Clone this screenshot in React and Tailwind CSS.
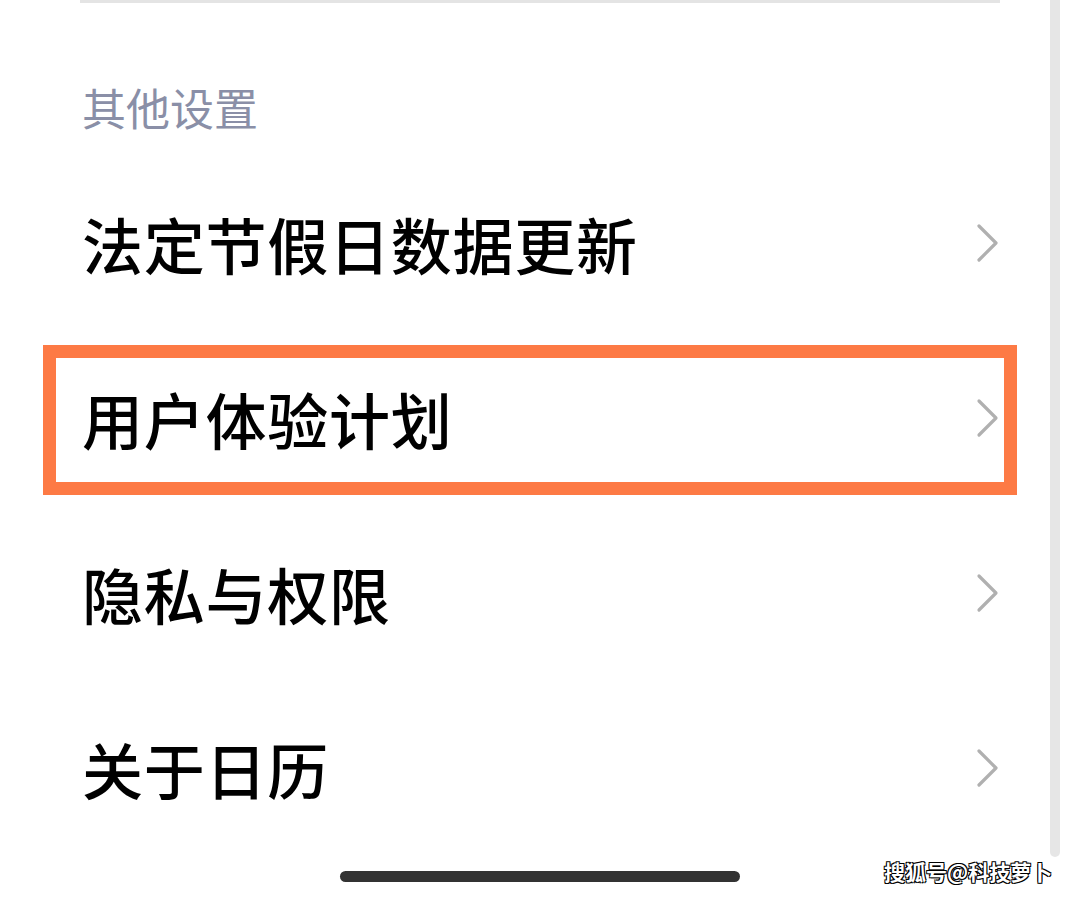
/**
 * 日历设置 — 其他设置列表
 */

const ITEMS = [
  { id: 'holiday', label: '法定节假日数据更新' },
  { id: 'ux', label: '用户体验计划', marked: true },
  { id: 'privacy', label: '隐私与权限' },
  { id: 'about', label: '关于日历' },
];

function Chevron() {
  return (
    <svg width="24" height="40" viewBox="0 0 24 40" fill="none" className="shrink-0">
      <path d="M3 3 L20 20 L3 37" stroke="#b0b0b0" strokeWidth="3.2" strokeLinecap="round" strokeLinejoin="round" />
    </svg>
  );
}

export default function App() {
  return (
    <div
      className="relative w-[1080px] h-[898px] bg-white overflow-hidden flex"
      style={{ fontFamily: '"Noto Sans CJK SC", "Noto Sans", sans-serif' }}
    >
      <div className="w-[1050px] pl-[80px] pr-[50px]">
        <div className="h-[3px] bg-[#e4e4e4]" />

        <div className="h-[155px] pt-[53px] flex items-center pl-[2px]">
          <h2 className="text-[44px] leading-none text-[#8a8fa7] font-normal">其他设置</h2>
        </div>

        <div>
          {ITEMS.map((item) => (
            <div key={item.id} className="relative h-[175px] flex items-center justify-between pl-[2px] pb-[5px]">
              <span className="text-[61px] leading-none font-medium tracking-[0.75px] text-black">{item.label}</span>
              <Chevron />
              {item.marked ? (
                <span className="absolute left-[-37px] right-[-17px] top-[12px] bottom-[13px] border-[13px] border-[#fd7a45] pointer-events-none" />
              ) : null}
            </div>
          ))}
        </div>
      </div>

      <div className="w-[10px] h-[857px] bg-[#e6e6e6] rounded-b-full" />

      <div className="absolute left-[340px] top-[871px] w-[400px] h-[11px] rounded-full bg-[#333333]" />

      <span
        className="absolute left-[884px] top-[858px] text-[21px] leading-[26px] text-white font-bold"
        style={{ textShadow: '1px 1px 0 #000, -1px -1px 0 #000, 1px -1px 0 #000, -1px 1px 0 #000' }}
      >
        搜狐号@科技萝卜
      </span>
    </div>
  );
}
